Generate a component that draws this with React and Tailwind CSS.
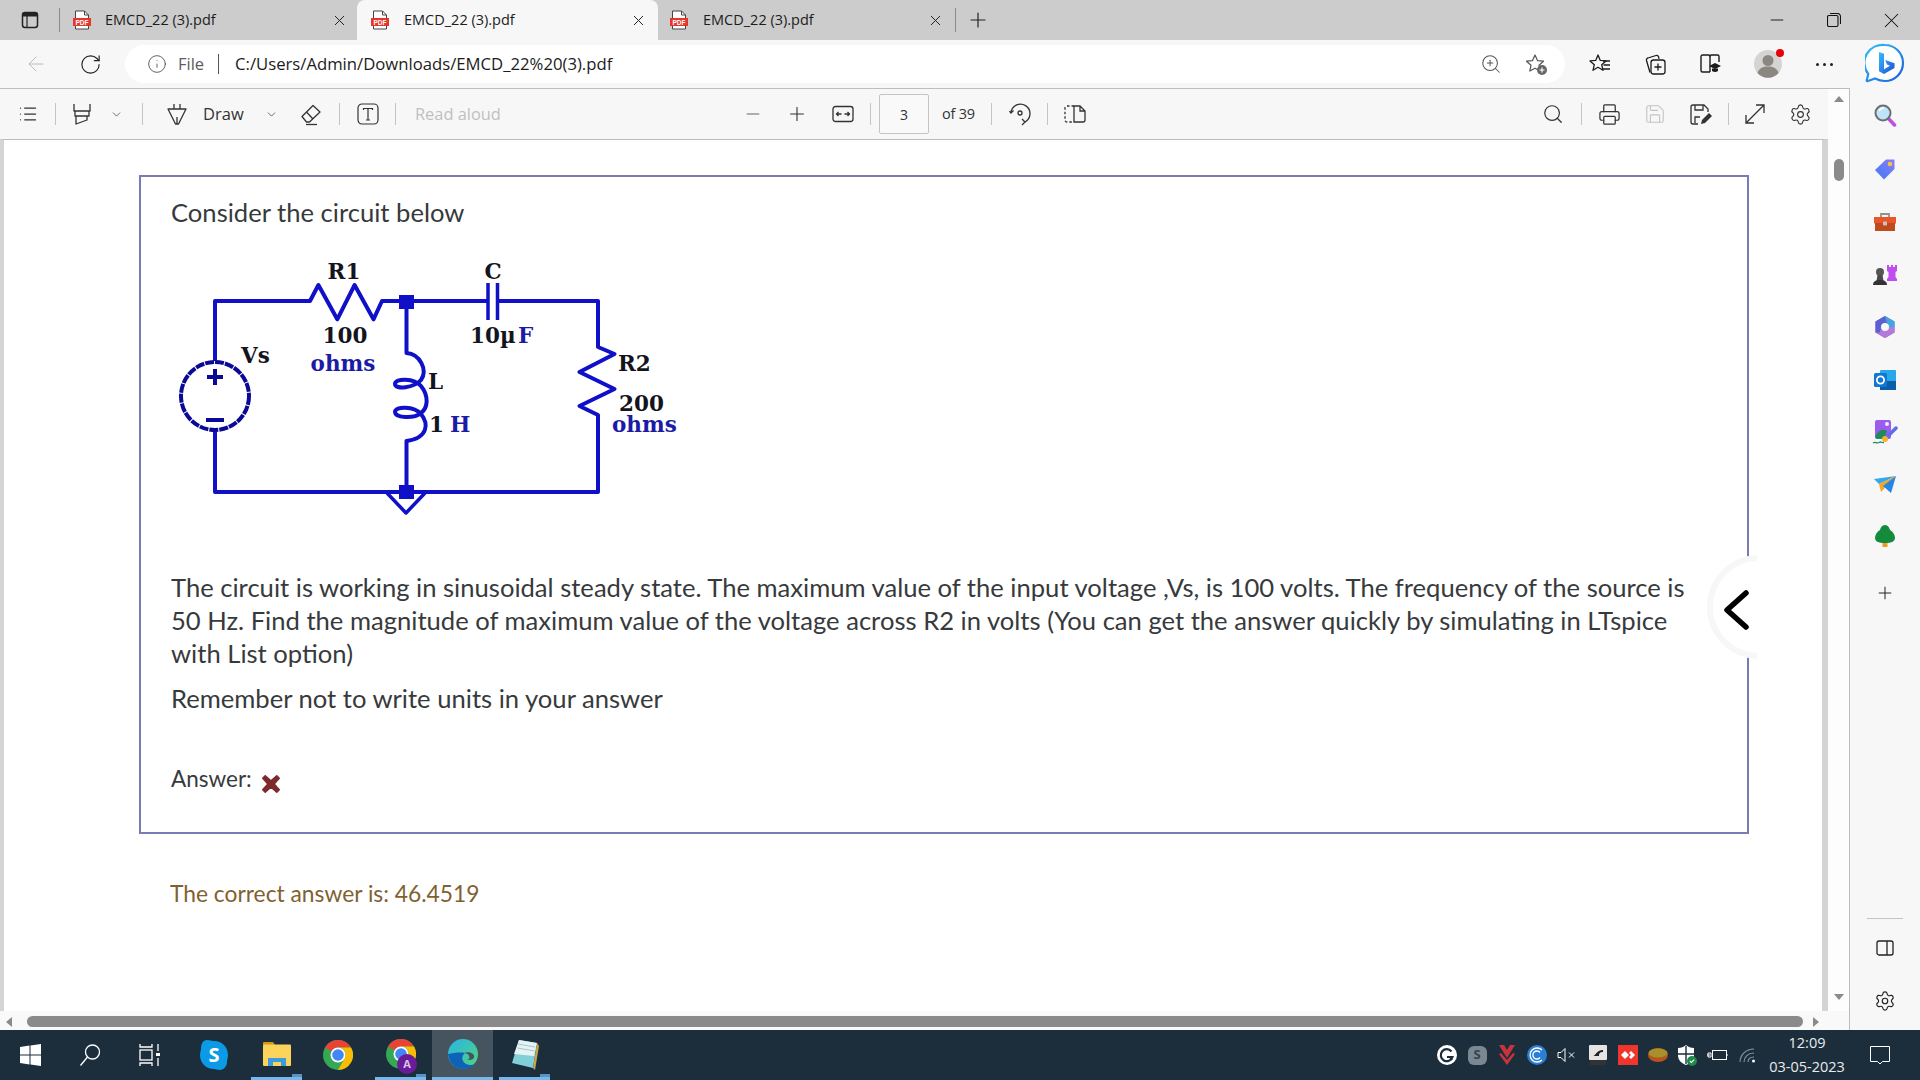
import React from 'react';
import {
  ArrowLeft,
  ChevronDown,
  Info,
  List,
  Minus,
  Plus,
  Printer,
  RotateCw,
  Save,
  Search,
  Settings,
  X,
  ZoomIn,
} from 'lucide-react';

const uiFont = "font-['Open_Sans',sans-serif]";

const Slot = ({ className = '', children }) => (
  <div className={`flex shrink-0 items-center justify-center ${className}`}>{children}</div>
);

const Sep = ({ className = '' }) => <div className={`h-[22px] w-px shrink-0 bg-[#c4c4c4] ${className}`} />;

const PdfIcon = () => (
  <svg width="18" height="20" viewBox="0 0 18 20" className="shrink-0">
    <path d="M2.5 1h9l4 4v14h-13z" fill="#fff" stroke="#444" strokeWidth="1" />
    <path d="M11.5 1v4h4" fill="none" stroke="#444" strokeWidth="1" />
    <rect x="0" y="8" width="18" height="8" fill="#e5352c" />
    <text x="9" y="14.6" textAnchor="middle" fontSize="6.5" fontWeight="700" fill="#fff" fontFamily="Liberation Sans, sans-serif">
      PDF
    </text>
  </svg>
);

const Tab = ({ active, className = '', closeClass = '', iconClass = '', textClass = '' }) => (
  <div
    className={`flex h-10 shrink-0 items-center ${active ? 'rounded-t-lg bg-[#f7f7f7]' : ''} ${className}`}
  >
    <div className={iconClass}>
      <PdfIcon />
    </div>
    <span className={`text-[14.5px] text-[#1c1c1c] ${textClass}`}>EMCD_22 (3).pdf</span>
    <X size={17} strokeWidth={1.4} className={`ml-auto text-[#222] ${closeClass}`} />
  </div>
);

const SidebarToggle = () => (
  <svg width="20" height="20" viewBox="0 0 20 20">
    <rect x="2.5" y="2.5" width="15" height="15" rx="2.5" fill="none" stroke="#222" strokeWidth="1.5" />
    <path d="M3 3h14v3.5H3z" fill="#222" />
    <path d="M7 6v11" stroke="#222" strokeWidth="1.2" />
  </svg>
);

const RestoreIcon = () => (
  <svg width="14" height="14" viewBox="0 0 14 14" fill="none" stroke="#111" strokeWidth="1.100">
    <rect x="0.5" y="2.5" width="10.5" height="11" rx="1.5" />
    <path d="M3 .5h7.5a3 3 0 0 1 3 3V11" />
  </svg>
);

const StarAdd = () => (
  <svg width="24" height="24" viewBox="0 0 24 24" fill="none" stroke="#555" strokeWidth="1.2">
    <path d="M11 3l2.5 5.6 6 .6-4.5 4 1.2 5.8L11 16.2 5.8 19 7 13.2l-4.5-4 6-.6z" strokeLinejoin="round" />
    <circle cx="18" cy="18" r="5" fill="#666" stroke="none" />
    <path d="M18 15.5v5M15.5 18h5" stroke="#fff" strokeWidth="1.2" />
  </svg>
);

const Favorites = () => (
  <svg width="24" height="24" viewBox="0 0 24 24" fill="none" stroke="#1c1c1c" strokeWidth="1.3" strokeLinejoin="round">
    <path d="M10 3l2.3 5.4 5.7.5-4.3 3.8 1.3 5.6-5-3-5 3 1.3-5.6L2 8.9l5.7-.5z" />
    <path d="M15 9h7M15.500 13h6.500M15 17h7" />
  </svg>
);

const Collections = () => (
  <svg width="24" height="24" viewBox="0 0 24 24" fill="none" stroke="#1c1c1c" strokeWidth="1.3" strokeLinejoin="round">
    <path d="M7 20.500 3.500 8.500a2 2 0 0 1 1.400-2.500L13 3.500a2 2 0 0 1 2.500 1.300l.6 2" />
    <rect x="8" y="8" width="14" height="14" rx="2.500" />
    <path d="M15 11.500v7M11.500 15h7" />
  </svg>
);

const Reader = () => (
  <svg width="24" height="24" viewBox="0 0 24 24" fill="none" stroke="#1c1c1c" strokeWidth="1.4">
    <path d="M12 20H4.500a1.500 1.500 0 0 1-1.500-1.500v-14A1.500 1.500 0 0 1 4.500 3H11l1 1 1-1h6.500A1.500 1.500 0 0 1 21 4.500V10" />
    <path d="M12 4v16" />
    <path d="M11 14l6-3 6 3-6 3z" fill="#1c1c1c" stroke="none" />
    <path d="M14 16.500v2.500c2 1.300 4 1.300 6 0v-2.500" fill="#1c1c1c" stroke="none" />
  </svg>
);

const Avatar = () => (
  <div className="relative h-7 w-7">
    <svg width="28" height="28" viewBox="0 0 28 28">
      <circle cx="14" cy="14" r="14" fill="#d6d4d0" />
      <circle cx="14" cy="10.500" r="5.500" fill="#8a8783" />
      <path d="M3.500 23c1.500-5 5.500-6.500 10.500-6.500S23 18 24.500 23a14 14 0 0 1-21 0z" fill="#8a8783" />
    </svg>
    <span className="absolute right-[-2px] top-[-1px] h-2 w-2 rounded-full bg-[#e8000b]" />
  </div>
);

const Dots = () => (
  <div className="flex gap-[4px]">
    <span className="h-[3px] w-[3px] rounded-full bg-[#222]" />
    <span className="h-[3px] w-[3px] rounded-full bg-[#222]" />
    <span className="h-[3px] w-[3px] rounded-full bg-[#222]" />
  </div>
);

const BingChat = () => (
  <svg width="40" height="42" viewBox="0 0 40 42">
    <defs>
      <linearGradient id="bing-ring" x1="0" y1="0" x2="1" y2="1">
        <stop offset="0" stopColor="#35c1f1" />
        <stop offset="1" stopColor="#1b5fe0" />
      </linearGradient>
      <linearGradient id="bing-b" x1="0" y1="0" x2="1" y2="1">
        <stop offset="0" stopColor="#37bdf8" />
        <stop offset="1" stopColor="#1d4fd8" />
      </linearGradient>
    </defs>
    <path
      d="M20 2a18 18 0 0 1 0 36c-4 0-7-1-10-2.500L3 38c-1 .3-1.500-.3-1.200-1l1.500-6A18 18 0 0 1 20 2z"
      fill="#fff"
      stroke="url(#bing-ring)"
      strokeWidth="2.200"
    />
    <path d="M14 9l5 1.700v15.500l6-3.400-3-1.300-1.800-4.500 9.300 3.200v4.800L19 31l-5-2.800z" fill="url(#bing-b)" />
  </svg>
);

const HighlightIcon = () => (
  <svg width="22" height="24" viewBox="0 0 22 24" fill="none" stroke="#333" strokeWidth="1.3" strokeLinejoin="round">
    <path d="M3 2v7h16V2" />
    <path d="M4 9v5h14V9M5 14v8l11-4v-4" />
  </svg>
);

const DrawIcon = () => (
  <svg width="22" height="24" viewBox="0 0 22 24" fill="none" stroke="#333" strokeWidth="1.3" strokeLinejoin="round">
    <path d="M2 7h18L12.500 22h-3z" />
    <path d="M8 7V2M14 7V2" />
    <path d="M11 15v7" />
  </svg>
);

const EraserIcon = () => (
  <svg width="24" height="24" viewBox="0 0 24 24" fill="none" stroke="#333" strokeWidth="1.3" strokeLinejoin="round">
    <path d="M3 14.500 14 3.500l7 6.500L10.500 20H7.500z" />
    <path d="M7.500 10 14 17" />
    <path d="M7 22.500h11" />
  </svg>
);

const TextBoxIcon = () => (
  <svg width="22" height="22" viewBox="0 0 22 22" fill="none" stroke="#333" strokeWidth="1.2">
    <rect x="1" y="1" width="20" height="20" rx="4" />
    <path d="M6.500 7V5.500h9V7M11 5.500V17M9 17h4" />
  </svg>
);

const FitIcon = () => (
  <svg width="22" height="18" viewBox="0 0 22 18" fill="none" stroke="#333" strokeWidth="1.3">
    <rect x="1" y="1.500" width="20" height="15" rx="2.500" />
    <path d="M4.500 9h5M6.500 7 4.500 9l2 2M17.500 9h-5M15.500 7l2 2-2 2" />
  </svg>
);

const RotateIcon = () => (
  <svg width="24" height="26" viewBox="0 0 24 26" fill="none" stroke="#333" strokeWidth="1.3">
    <path d="M3 12a9.500 9.500 0 1 1 14 9" />
    <path d="M5.500 9.500 3 12l-1.500-2" />
    <path d="M14 24l3-3-3-3" />
    <circle cx="12" cy="12" r="2" />
  </svg>
);

const PageViewIcon = () => (
  <svg width="22" height="20" viewBox="0 0 22 20" fill="none" stroke="#333" strokeWidth="1.3">
    <path d="M10 2H3a2 2 0 0 0-2 2v12a2 2 0 0 0 2 2h7" strokeDasharray="2.500 2" />
    <path d="M10 2h6l5 5v9a2 2 0 0 1-2 2h-9zM16 2v5h5" />
  </svg>
);

const SaveAsIcon = () => (
  <svg width="24" height="24" viewBox="0 0 24 24" fill="none" stroke="#333" strokeWidth="1.3">
    <path d="M10 22H5a2 2 0 0 1-2-2V5a2 2 0 0 1 2-2h11l4 4v3" />
    <path d="M7 3v5h8V3M7 21v-6h5" />
    <path d="M13 22l1-4 7-7 3 3-7 7z" fill="#333" stroke="none" />
  </svg>
);

const ExpandIcon = () => (
  <svg width="24" height="24" viewBox="0 0 24 24" fill="none" stroke="#333" strokeWidth="1.3">
    <path d="M13 3h8v8M3 13v8h8M21 3 3 21" />
  </svg>
);

const Triangle = ({ dir }) => {
  const points = {
    up: '0,6 10,6 5,0',
    down: '0,0 10,0 5,6',
    left: '6,0 6,10 0,5',
    right: '0,0 0,10 6,5',
  };
  const vertical = dir === 'up' || dir === 'down';
  return (
    <svg width={vertical ? 10 : 6} height={vertical ? 6 : 10} viewBox={vertical ? '0 0 10 6' : '0 0 6 10'}>
      <polygon points={points[dir]} fill="#8a8a8a" />
    </svg>
  );
};

const Circuit = () => {
  const wire = '#0f10c8';
  const serif = 'DejaVu Serif, serif';
  const label = { fontFamily: serif, fontWeight: 700, fontSize: 21.5, fill: '#14141e' };
  const blue = { fontFamily: serif, fontWeight: 700, fontSize: 21.5, fill: '#1b1ba6' };
  return (
    <svg width="529" height="290" viewBox="171 240 529 290" className="mt-[11px] block">
      <g fill="none" stroke={wire} strokeWidth="4" strokeLinejoin="round">
        <path d="M215 361V301H310L318.400 285L337.300 319.300L354.600 285L373.500 319.300L382 301H488M497.500 301H598V347L614.500 354L579.500 372L614.500 389L579.500 406L598 415V492H215V431" />
        <path d="M406.500 301V353C420 354 428 370 421 380C414 388 395 390 395 384C395 378 414 378 421 386C429 396 428 408 421 413C414 419 395 418 395 412C395 406 414 406 421 414C429 424 428 438 406.500 441V492" />
        <path d="M488 283V320M497.500 283V320" strokeWidth="3.500" />
        <path d="M387 493L406 513L425 493" strokeWidth="3.500" />
      </g>
      <circle cx="215" cy="396" r="34" fill="none" stroke="#0a0a96" strokeWidth="4" strokeDasharray="9 1" />
      <path d="M207 377H223M215 369V385M206 420H224" stroke="#0a0a96" strokeWidth="4" fill="none" />
      <rect x="399" y="295" width="15" height="14" fill={wire} />
      <rect x="399" y="485" width="15" height="14" fill={wire} />
      <text x="344" y="279" textAnchor="middle" style={label}>R1</text>
      <text x="493" y="279" textAnchor="middle" style={label}>C</text>
      <text x="345" y="343" textAnchor="middle" style={label}>100</text>
      <text x="343" y="371" textAnchor="middle" style={blue}>ohms</text>
      <text x="241" y="363" style={label}>Vs</text>
      <text x="470" y="343" style={label}>10µ</text>
      <text x="518" y="343" style={blue}>F</text>
      <text x="618" y="371" style={label}>R2</text>
      <text x="619" y="411" style={label}>200</text>
      <text x="612" y="432" style={blue}>ohms</text>
      <text x="428" y="389" style={label}>L</text>
      <text x="429" y="432" style={label}>1</text>
      <text x="450" y="432" style={blue}>H</text>
    </svg>
  );
};

const MagnifierIcon = () => (
  <svg width="24" height="24" viewBox="0 0 24 24">
    <path d="M14 14l7.500 8" stroke="#c04fe0" strokeWidth="3.500" strokeLinecap="round" />
    <circle cx="10" cy="10" r="7.500" fill="#bfe4f5" stroke="#6a6f76" strokeWidth="2" />
    <path d="M6 8c1-2 3-3 5-3" fill="none" stroke="#fff" strokeWidth="1.500" />
  </svg>
);

const TagIcon = () => (
  <svg width="24" height="24" viewBox="0 0 24 24">
    <defs>
      <linearGradient id="tag" x1="0" y1="1" x2="1" y2="0">
        <stop offset="0" stopColor="#3b7cf5" />
        <stop offset="1" stopColor="#8f7bf5" />
      </linearGradient>
    </defs>
    <path d="M2 13 13 2.500h8.500V12L11 22.500z" fill="url(#tag)" strokeLinejoin="round" />
    <circle cx="17" cy="7" r="2.300" fill="#f5c542" />
  </svg>
);

const BriefcaseIcon = () => (
  <svg width="24" height="22" viewBox="0 0 24 22">
    <path d="M8 6V3h8v3" fill="none" stroke="#9a8f86" strokeWidth="1.800" />
    <rect x="1" y="6" width="22" height="6.500" fill="#e8562a" />
    <rect x="2" y="12" width="20" height="8" fill="#bf4a1d" />
    <rect x="10" y="10.500" width="4" height="4" rx="1" fill="#c9c4bf" />
  </svg>
);

const ChessIcon = () => (
  <svg width="26" height="24" viewBox="0 0 26 24">
    <path d="M15 2h2v2h2V2h2v2h2V2h2v6l-1.500 1v5l1.500 2v2H15v-2l1.500-2V9L15 8z" fill="#bf4df0" />
    <circle cx="8" cy="9" r="4" fill="#555" />
    <path d="M5.500 12h5l1 6h-7z" fill="#4a4a4a" />
    <path d="M1 22c0-3 2-5 7-5s7 2 7 5z" fill="#333" />
  </svg>
);

const CopilotIcon = () => (
  <svg width="24" height="24" viewBox="0 0 24 24">
    <path d="M12 1 21.500 6.500v11L12 23 2.500 17.500v-11z" fill="#6b66d8" strokeLinejoin="round" />
    <path d="M12 1 21.500 6.500V12h-6z" fill="#3fa7e0" />
    <path d="M2.500 17.500 12 23l9.500-5.500V12h-5z" fill="#b57ad9" />
    <path d="M2.500 6.500 12 1v7l-5 4v5.500l-4.500 0z" fill="#5b5fd0" />
    <circle cx="12" cy="12" r="4" fill="#f7f7f7" />
  </svg>
);

const OutlookIcon = () => (
  <svg width="24" height="24" viewBox="0 0 24 24">
    <rect x="7" y="2" width="16" height="20" rx="1" fill="#28a8ea" />
    <path d="M7 13h16v9H7z" fill="#0a5fa8" />
    <rect x="1" y="5" width="13" height="14" rx="1.500" fill="#0f78d4" />
    <circle cx="7.500" cy="12" r="3.600" fill="none" stroke="#fff" strokeWidth="1.800" />
  </svg>
);

const ImageIcon = () => (
  <svg width="26" height="26" viewBox="0 0 26 26">
    <rect x="3" y="1" width="16" height="19" rx="2" fill="#9b5cf0" />
    <path d="M3 18c3-7 8-9 12-6l-3 8H5z" fill="#1f8a5b" />
    <circle cx="15" cy="5" r="2" fill="#f3eafd" />
    <path d="M13 20 24 9" stroke="#5f6bea" strokeWidth="3.500" strokeLinecap="round" />
    <circle cx="13" cy="20" r="3" fill="#f5b335" />
    <path d="M1 24c3-2 3 1 6-.500s2 .5 5 0" fill="none" stroke="#1f8a5b" strokeWidth="1.300" />
  </svg>
);

const SendIcon = () => (
  <svg width="24" height="20" viewBox="0 0 24 20">
    <path d="M1 4 23 1 6 9z" fill="#35a7f2" />
    <path d="M23 1 6 9l2 8z" fill="#f5a623" />
    <path d="M23 1 10 11l8 7z" fill="#2586e6" />
  </svg>
);

const TreeIcon = () => (
  <svg width="24" height="24" viewBox="0 0 24 24">
    <rect x="9.500" y="17" width="5" height="6" fill="#ef9a1a" />
    <path d="M12 1c3 0 4.500 3 5 5 3 1.500 5 5 5 8 0 3-3 5-10 5S2 17 2 14c0-3 2-6.500 5-8 .5-2 2-5 5-5z" fill="#138a3c" />
  </svg>
);

const PanelIcon = () => (
  <svg width="20" height="20" viewBox="0 0 20 20" fill="none" stroke="#222" strokeWidth="1.300">
    <rect x="2" y="3" width="16" height="14" rx="2" />
    <path d="M12 3v14" />
  </svg>
);

const WindowsLogo = () => (
  <svg width="21" height="22" viewBox="0 0 21 22" fill="#fff">
    <path d="M0 3 9.500 1.600v8.900H0zM10.500 1.500 21 0v10.500H10.500zM0 11.500h9.500v8.900L0 19zM10.500 11.500H21V22l-10.500-1.500z" />
  </svg>
);

const SearchTask = () => (
  <svg width="22" height="24" viewBox="0 0 22 24" fill="none" stroke="#fff" strokeWidth="1.300">
    <circle cx="13.500" cy="9" r="7" />
    <path d="M8.500 14 1.500 22.500" />
  </svg>
);

const TaskView = () => (
  <svg width="22" height="24" viewBox="0 0 22 24" fill="none" stroke="#fff" strokeWidth="1.300">
    <path d="M1 1v3h12V1M1 23v-3h12v3" />
    <rect x="1" y="7" width="12" height="10" />
    <path d="M19 1v7M19 15v8" />
    <rect x="17" y="10" width="4" height="3" fill="#fff" stroke="none" />
  </svg>
);

const SkypeIcon = () => (
  <svg width="30" height="32" viewBox="0 0 30 32">
    <path d="M8 1c3 0 4 1 7 1 8 0 14 6 14 14 0 3-1 4-1 7 0 4-3 8-7 8-3 0-4-1-6-1C7 30 1 24 1 16c0-3 1-4 1-7 0-4 2-8 6-8z" fill="#0a9ae6" />
    <text x="15" y="23" textAnchor="middle" fontSize="20" fontWeight="700" fill="#fff" fontFamily="Open Sans, sans-serif">S</text>
  </svg>
);

const FolderIcon = () => (
  <svg width="28" height="26" viewBox="0 0 28 26">
    <path d="M0 2a1 1 0 0 1 1-1h9l2 3h-12z" fill="#d49a12" />
    <rect x="0" y="3.500" width="28" height="21.500" rx="1" fill="#fbd45c" />
    <path d="M5 25v-8h18v8h-5v-4h-8v4z" fill="#3e9be0" />
  </svg>
);

const ChromeIcon = () => (
  <svg width="30" height="30" viewBox="0 0 30 30">
    <circle cx="15" cy="15" r="15" fill="#34a853" />
    <path d="M15 0a15 15 0 0 1 13 7.500H15A7.500 7.500 0 0 0 8.500 11.250L2 7.500A15 15 0 0 1 15 0z" fill="#ea4335" />
    <path d="M28 7.500A15 15 0 0 1 15 30l6.500-11.250A7.500 7.500 0 0 0 15 7.500z" fill="#fbbc04" />
    <circle cx="15" cy="15" r="7.500" fill="#fff" />
    <circle cx="15" cy="15" r="5.800" fill="#4285f4" />
  </svg>
);

const EdgeIcon = () => (
  <svg width="30" height="32" viewBox="0 0 30 32">
    <defs>
      <linearGradient id="edge" x1="0" y1="0" x2="1" y2="1">
        <stop offset="0" stopColor="#27b6e8" />
        <stop offset="1" stopColor="#54d37a" />
      </linearGradient>
    </defs>
    <circle cx="15" cy="16" r="15" fill="url(#edge)" />
    <path d="M0 16C1 26 8 31 15 31c5 0 9-1.500 12-5-4 2-10 1-12-3-1.500-3-.5-6 2-8-5-1-12 0-17 1z" fill="#0c63b8" />
    <path d="M16 15c3-1 7-1 9 1 1 1 2 3 0 5-2 1-4 1-6 .500 3 0 3-3 1-5-1-1-3-1.500-4-1.500z" fill="#46545f" />
  </svg>
);

const NotepadIcon = () => (
  <svg width="28" height="32" viewBox="0 0 28 32">
    <path d="M8 2 26 5l-4 25L1 25z" fill="#7fd0d8" />
    <path d="M8 2 26 5l-3 13L3 16z" fill="#e6f3f5" />
    <path d="M7 6l17 3M6.500 10l17 3" stroke="#a9c5cc" strokeWidth="1" />
    <path d="M26 5l2 3-4 24-2-2z" fill="#c9a34e" />
  </svg>
);

const TrayG = () => (
  <svg width="20" height="20" viewBox="0 0 20 20">
    <circle cx="10" cy="10" r="10" fill="#fff" />
    <path d="M14.500 6.500a6 6 0 1 0 1 5.500H10" fill="none" stroke="#1c2d3b" strokeWidth="2.200" />
    <path d="M13 12l2 3" stroke="#1c2d3b" strokeWidth="2" />
  </svg>
);

const TrayWifi = () => (
  <svg width="17" height="15" viewBox="0 0 17 15" fill="none" stroke="#8d98a1" strokeWidth="1.100">
    <path d="M1 14C1 7 7 1 15 1M5 14c0-5 4-9 10-9M9 14c0-3 2-5 6-5" />
    <circle cx="14.500" cy="13" r="1.500" fill="#fff" stroke="none" />
  </svg>
);

const RunningMark = () => (
  <span className="absolute bottom-0 right-0 h-[3px] w-[10px] bg-[#5a93c2]" />
);

const ToolbarRow = () => (
  <div className="flex h-[50px] shrink-0 items-center bg-[#f7f7f7] text-[#333]">
    <Slot className="w-[55px]"><List size={20} strokeWidth={1.5} /></Slot>
    <Sep />
    <Slot className="w-[52px]"><HighlightIcon /></Slot>
    <Slot className="w-4"><ChevronDown size={13} strokeWidth={1.3} /></Slot>
    <Sep className="ml-[18px]" />
    <Slot className="ml-[14px] w-10"><DrawIcon /></Slot>
    <span className="ml-[6px] w-[39px] shrink-0 whitespace-nowrap text-[16.500px] text-[#333]">Draw</span>
    <Slot className="ml-[21px] w-4"><ChevronDown size={13} strokeWidth={1.3} /></Slot>
    <Slot className="ml-4 w-8"><EraserIcon /></Slot>
    <Sep className="ml-3" />
    <Slot className="w-[55px]"><TextBoxIcon /></Slot>
    <Sep />
    <span className="ml-[19px] w-[87px] shrink-0 whitespace-nowrap text-[16.400px] text-[#c0c0c0]">Read aloud</span>
    <Slot className="ml-[233px] w-9"><Minus size={20} strokeWidth={1.3} className="text-[#666]" /></Slot>
    <Slot className="ml-2 w-9"><Plus size={22} strokeWidth={1.2} /></Slot>
    <Slot className="ml-[10px] w-9"><FitIcon /></Slot>
    <Sep className="ml-[9px]" />
    <div className="ml-2 flex h-[40px] w-[50px] shrink-0 items-center justify-center rounded-[2px] border border-[#c4c4c4] bg-[#f9f9f9] text-[14px] text-[#333]">
      3
    </div>
    <span className="ml-[13px] w-[33px] shrink-0 whitespace-nowrap text-[14.500px] tracking-[-0.2px] text-[#333]">of 39</span>
    <Sep className="ml-4" />
    <Slot className="w-[55px]"><RotateIcon /></Slot>
    <Sep />
    <Slot className="w-[54px]"><PageViewIcon /></Slot>
    <div className="ml-auto flex items-center pr-[9px]">
      <Slot className="w-9"><Search size={22} strokeWidth={1.3} /></Slot>
      <Sep className="ml-[10px]" />
      <Slot className="w-[55px]"><Printer size={23} strokeWidth={1.3} /></Slot>
      <Slot className="w-9"><Save size={22} strokeWidth={1.2} className="text-[#c4c4c4]" /></Slot>
      <Slot className="ml-[9px] w-9"><SaveAsIcon /></Slot>
      <Sep className="ml-[10px]" />
      <Slot className="w-[52px]"><ExpandIcon /></Slot>
      <Slot className="w-[38px]"><Settings size={23} strokeWidth={1.2} /></Slot>
    </div>
  </div>
);

const Question = () => (
  <div className="ml-[135px] mt-[35px] h-[659px] w-[1610px] border-2 border-[#7b7bb3] pl-[30px] pt-[19px] font-['Lato',sans-serif] text-[25.600px] leading-[33px] text-[#373a3c]">
    <p>Consider the circuit below</p>
    <Circuit />
    <p className="mt-[41px] w-[1530px]">
      The circuit is working in sinusoidal steady state. The maximum value of the input voltage ,Vs, is 100 volts. The
      frequency of the source is 50 Hz. Find the magnitude of maximum value of the voltage across R2 in volts (You can
      get the answer quickly by simulating in LTspice with List option)
    </p>
    <p className="mt-3">Remember not to write units in your answer</p>
    <div className="mt-[47px] flex items-start">
      <span className="text-[22.500px]">Answer:</span>
      <svg width="18" height="18" viewBox="2 2 14 14" className="ml-[10px] mt-[13px]">
        <path d="M2.500 4.500 4.500 2.500 9 6.500l4.500-4 2 2-4 4.500 4 4.500-2 2L9 11.500l-4.500 4-2-2 4-4.500z" fill="#7d2a2a" stroke="#7d2a2a" />
      </svg>
    </div>
  </div>
);

const App = () => (
  <div className={`flex h-[1080px] w-[1920px] flex-col overflow-hidden bg-white ${uiFont}`}>
    {/* tab strip */}
    <div className="flex h-10 shrink-0 items-center bg-[#cccccc]">
      <Slot className="w-[59px]"><SidebarToggle /></Slot>
      <div className="h-[24px] w-px bg-[#8a8a8a]" />
      <Tab className="w-[297px]" iconClass="ml-[13px]" textClass="ml-[14px]" closeClass="mr-[9px]" />
      <Tab active className="w-[301px]" iconClass="ml-[14px]" textClass="ml-[15px]" closeClass="mr-[11px]" />
      <Tab className="w-[297px]" iconClass="ml-3" textClass="ml-[15px]" closeClass="mr-[11px]" />
      <div className="h-[24px] w-px bg-[#8a8a8a]" />
      <Slot className="w-[44px]"><Plus size={24} strokeWidth={1.2} className="text-[#222]" /></Slot>
      <div className="ml-auto flex">
        <Slot className="w-[57px]"><Minus size={20} strokeWidth={1.100} className="text-[#111]" /></Slot>
        <Slot className="w-[57px]"><RestoreIcon /></Slot>
        <Slot className="w-[58px]"><X size={25} strokeWidth={1} className="text-[#111]" /></Slot>
      </div>
    </div>

    {/* address bar */}
    <div className="flex h-12 shrink-0 items-center bg-[#f7f7f7]">
      <Slot className="w-[72px]"><ArrowLeft size={24} strokeWidth={1} className="text-[#bcbcbc]" /></Slot>
      <Slot className="w-9"><RotateCw size={23} strokeWidth={1.2} className="text-[#222]" /></Slot>
      <div className="ml-[17px] flex h-[38px] w-[1440px] shrink-0 items-center rounded-full bg-white pl-[22px]">
        <Info size={20} strokeWidth={1.1} className="text-[#555]" />
        <span className="ml-[11px] w-[40px] text-[16.500px] text-[#5c5c5c]">File</span>
        <div className="h-5 w-px bg-[#555]" />
        <span className="ml-4 text-[16.700px] text-[#1c1c1c]">C:/Users/Admin/Downloads/EMCD_22%20(3).pdf</span>
        <div className="ml-auto flex items-center gap-[5px] pr-[9px]">
          <Slot className="w-10"><ZoomIn size={22} strokeWidth={1.1} className="text-[#555]" /></Slot>
          <Slot className="w-10"><StarAdd /></Slot>
        </div>
      </div>
      <Slot className="ml-[7px] w-14"><Favorites /></Slot>
      <Slot className="w-[54px]"><Collections /></Slot>
      <Slot className="w-14"><Reader /></Slot>
      <Slot className="w-[60px]"><Avatar /></Slot>
      <Slot className="w-[52px]"><Dots /></Slot>
      <Slot className="w-[70px]"><BingChat /></Slot>
    </div>

    {/* body */}
    <div className="flex min-h-0 flex-1 bg-[#f7f7f7]">
      <div className="flex w-[1850px] shrink-0 flex-col border-r border-t border-[#bdbdbd] bg-white">
        <div className="flex min-h-0 flex-1">
          <div className="flex w-[1828px] shrink-0 flex-col">
            <ToolbarRow />
            <div className="relative min-h-0 flex-1 border-l-[4px] border-r-[6px] border-t border-l-[#d4d4d4] border-r-[#d4d4d4] border-t-[#bdbdbd]">
              <Question />
              <p className="ml-[166px] mt-[43px] font-['Lato',sans-serif] text-[22.800px] leading-[33px] text-[#7f6130]">
                The correct answer is: 46.4519
              </p>
              {/* collapse handle sits over the right edge of the page */}
              <div className="absolute left-[1703px] top-[415px] h-[104px] w-[50px] overflow-hidden">
                <div className="flex h-[104px] w-[104px] items-center rounded-full border-[6px] border-[#f7f7f7] bg-white">
                  <svg width="28" height="40" viewBox="0 0 28 40" className="ml-[11px] mt-[6px]" fill="none" stroke="#000" strokeWidth="5.500" strokeLinecap="round" strokeLinejoin="round">
                    <path d="M22 3 3 20l19 17" />
                  </svg>
                </div>
              </div>
            </div>
          </div>
          <div className="flex flex-1 flex-col items-center bg-[#fdfdfd] pb-[11px] pt-[7px]">
            <Triangle dir="up" />
            <div className="mt-[57px] h-[22px] w-[10px] rounded-full bg-[#8a8a8a]" />
            <div className="mt-auto"><Triangle dir="down" /></div>
          </div>
        </div>
        <div className="flex h-[19px] shrink-0 items-center bg-[#f9f9f9] pt-[2px]">
          <div className="ml-[6px]"><Triangle dir="left" /></div>
          <div className="ml-[15px] h-[11px] w-[1776px] rounded-full bg-[#8a8a8a]" />
          <div className="ml-[10px]"><Triangle dir="right" /></div>
        </div>
      </div>

      {/* edge sidebar */}
      <div className="flex flex-1 flex-col items-center pt-[12px]">
        <Slot className="h-[30px]"><MagnifierIcon /></Slot>
        <Slot className="mt-[24px] h-[30px]"><TagIcon /></Slot>
        <Slot className="mt-[23px] h-[30px]"><BriefcaseIcon /></Slot>
        <Slot className="mt-[23px] h-[30px]"><ChessIcon /></Slot>
        <Slot className="mt-[22px] h-[30px]"><CopilotIcon /></Slot>
        <Slot className="mt-[23px] h-[30px]"><OutlookIcon /></Slot>
        <Slot className="mt-[22px] h-[30px]"><ImageIcon /></Slot>
        <Slot className="mt-[23px] h-[30px]"><SendIcon /></Slot>
        <Slot className="mt-[21px] h-[30px]"><TreeIcon /></Slot>
        <Slot className="mt-[27px] h-[30px]"><Plus size={20} strokeWidth={1.2} className="text-[#222]" /></Slot>
        <div className="mt-auto h-px w-[36px] bg-[#c4c4c4]" />
        <Slot className="mt-[18px] h-[22px]"><PanelIcon /></Slot>
        <Slot className="mb-[17px] mt-[30px] h-[24px]"><Settings size={22} strokeWidth={1.3} className="text-[#222]" /></Slot>
      </div>
    </div>

    {/* taskbar */}
    <div className="flex h-[50px] shrink-0 items-center bg-[#1c2d3b] text-white">
      <Slot className="w-[60px]"><WindowsLogo /></Slot>
      <Slot className="w-[60px]"><SearchTask /></Slot>
      <Slot className="w-[59px]"><TaskView /></Slot>
      <Slot className="h-[50px] w-[70px]"><SkypeIcon /></Slot>
      <Slot className="relative ml-[2px] h-[50px] w-[51px] border-b-[3px] border-[#76b9ed]">
        <FolderIcon />
        <RunningMark />
      </Slot>
      <Slot className="h-[50px] w-[72px]"><ChromeIcon /></Slot>
      <Slot className="relative ml-px h-[50px] w-[51px] border-b-[3px] border-[#76b9ed]">
        <ChromeIcon />
        <span className="absolute left-[22px] top-[24px] flex h-5 w-5 items-center justify-center rounded-full bg-[#6a1b9a] text-[11px] font-bold text-[#d8c4ea]">A</span>
        <RunningMark />
      </Slot>
      <Slot className="ml-[6px] h-[50px] w-[61px] border-b-[3px] border-[#76b9ed] bg-[#46545f]"><EdgeIcon /></Slot>
      <Slot className="relative ml-[6px] h-[50px] w-[51px] border-b-[3px] border-[#76b9ed]">
        <NotepadIcon />
        <RunningMark />
      </Slot>

      <div className="ml-auto flex items-center">
        <Slot className="w-[30px]"><TrayG /></Slot>
        <Slot className="w-[30px]">
          <span className="flex h-[19px] w-[19px] items-center justify-center rounded-[6px] bg-[#7b8891] text-[13px] font-bold text-[#33434f]">S</span>
        </Slot>
        <Slot className="w-[30px]">
          <svg width="16" height="20" viewBox="0 0 16 20" fill="#c8343c">
            <path d="M0 0h5l3 5 3-5h5L8 13z" />
            <path d="M0 9l8 11 8-11-2-1-6 7-6-7z" />
          </svg>
        </Slot>
        <Slot className="w-[30px]">
          <svg width="20" height="20" viewBox="0 0 20 20">
            <circle cx="10" cy="10" r="10" fill="#2a7fd4" />
            <path d="M15 5a7 7 0 1 0 0 10M13 7.500a4 4 0 1 0 0 5" fill="none" stroke="#fff" strokeWidth="1.300" />
          </svg>
        </Slot>
        <Slot className="w-[30px]">
          <svg width="20" height="16" viewBox="0 0 20 16" fill="none" stroke="#fff" strokeWidth="1">
            <path d="M1 5.500h3l4-4v13l-4-4H1zM12 5.500l5 5M17 5.500l-5 5" />
          </svg>
        </Slot>
        <Slot className="w-[31px]">
          <svg width="18" height="20" viewBox="0 0 18 20">
            <rect x="0" y="0" width="18" height="15" rx="1" fill="#e4e4e4" />
            <path d="M4 11c3 0 3-6 10-6v2c-3 0-4 1-4 4z" fill="#222" />
            <rect x="1" y="15" width="16" height="5" fill="#333" />
          </svg>
        </Slot>
        <Slot className="w-[30px]">
          <svg width="20" height="20" viewBox="0 0 20 20">
            <rect width="20" height="20" fill="#f0352c" />
            <path d="M7 6l4 4-4 4-4-4zM13 6l4 4-4 4-2-2 2-2-2-2z" fill="#fff" />
          </svg>
        </Slot>
        <Slot className="w-[29px]">
          <svg width="20" height="14" viewBox="0 0 20 14">
            <ellipse cx="10" cy="7" rx="10" ry="7" fill="#b5541e" />
            <ellipse cx="10" cy="5" rx="9.500" ry="4.500" fill="#a8912a" />
          </svg>
        </Slot>
        <Slot className="w-[30px]">
          <svg width="20" height="21" viewBox="0 0 20 21">
            <path d="M9 0c2 2 5 3 8 3v7c0 5-3 8-8 10-5-2-8-5-8-10V3c3 0 6-1 8-3z" fill="#fff" />
            <path d="M9 1v18M1 9h16" stroke="#1c2d3b" strokeWidth="1.400" />
            <circle cx="15" cy="16" r="5" fill="#1d8a4a" />
            <path d="M12.800 16l1.600 1.500 2.800-2.800" fill="none" stroke="#fff" strokeWidth="1.100" />
          </svg>
        </Slot>
        <Slot className="w-[30px]">
          <svg width="21" height="14" viewBox="0 0 21 14" fill="none" stroke="#fff" strokeWidth="1">
            <rect x="5.500" y="2.500" width="14" height="9" />
            <path d="M20 6v2M0 7h3M1 5v4h3V5z" />
          </svg>
        </Slot>
        <Slot className="w-[31px]"><TrayWifi /></Slot>
        <div className="ml-1 flex w-[80px] flex-col items-center whitespace-nowrap text-[14.500px] leading-[24px] text-[#e8ebee]">
          <span>12:09</span>
          <span>03-05-2023</span>
        </div>
        <Slot className="ml-[6px] mr-[14px] w-[53px]">
          <svg width="20" height="20" viewBox="0 0 20 20" fill="none" stroke="#fff" strokeWidth="1">
            <path d="M.5 1.500h19v15h-7l-2.500 2.500-2.500-2.500h-7z" />
          </svg>
        </Slot>
      </div>
    </div>
  </div>
);

export default App;
